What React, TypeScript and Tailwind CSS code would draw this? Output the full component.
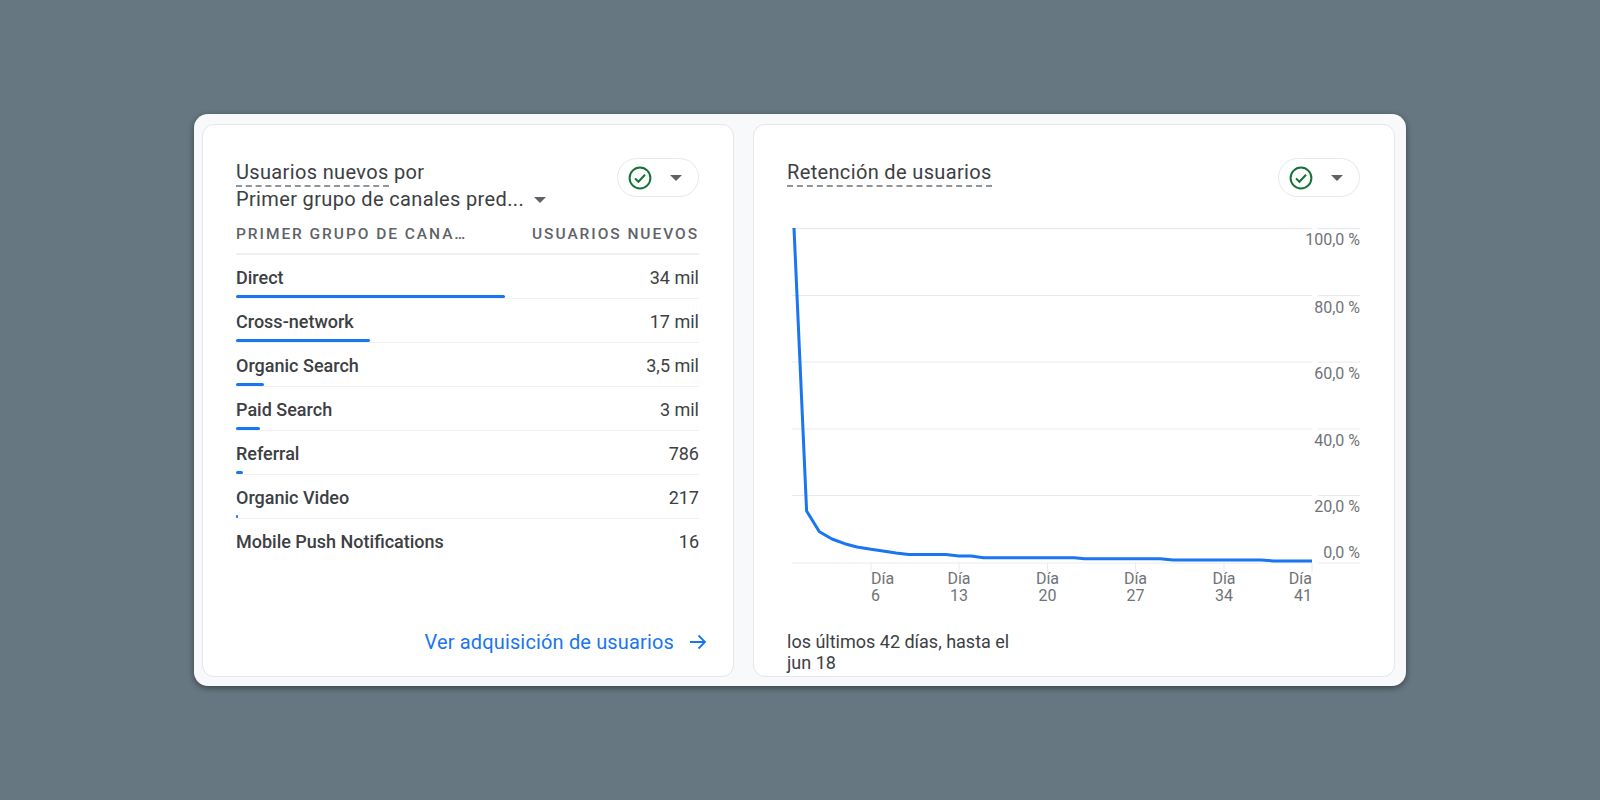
const channels = [
  { name: 'Direct', value: '34 mil', bar: 269 },
  { name: 'Cross-network', value: '17 mil', bar: 134 },
  { name: 'Organic Search', value: '3,5 mil', bar: 28 },
  { name: 'Paid Search', value: '3 mil', bar: 24 },
  { name: 'Referral', value: '786', bar: 7 },
  { name: 'Organic Video', value: '217', bar: 2 },
  { name: 'Mobile Push Notifications', value: '16', bar: 0 },
];

const gridLines = [227.5, 294.5, 361, 428, 494.5, 562];

const yLabels = [
  { label: '100,0 %', y: 244 },
  { label: '80,0 %', y: 312 },
  { label: '60,0 %', y: 378 },
  { label: '40,0 %', y: 445 },
  { label: '20,0 %', y: 511 },
  { label: '0,0 %', y: 557 },
];

const xLabels = [
  { day: '6', x: 871, anchor: 'start' },
  { day: '13', x: 959, anchor: 'middle' },
  { day: '20', x: 1047.5, anchor: 'middle' },
  { day: '27', x: 1135.5, anchor: 'middle' },
  { day: '34', x: 1224, anchor: 'middle' },
  { day: '41', x: 1312, anchor: 'end' },
];

const retention =
  '794,227 806.6,510 819.4,530.7 832,538 844.7,542.7 857,546 871,548.3 883,550 896,552 908.7,553.5 920,553.5 933,553.5 945.7,553.5 959,555 971,555 983.6,556.7 1074,556.7 1084.6,557.7 1160,557.7 1173,559 1261,559 1274,560 1312,560';

function Caret({ className }: { className?: string }) {
  return (
    <svg width="12" height="6" viewBox="0 0 12 6" className={className}>
      <path d="M0 0h12L6 6z" fill="#5f6368" />
    </svg>
  );
}

function StatusPill() {
  return (
    <div className="flex h-[39px] w-[82px] shrink-0 items-center rounded-full border border-[#e6e8eb] pl-[10px]">
      <svg width="24" height="24" viewBox="0 0 24 24" fill="none" stroke="#137333">
        <circle cx="12" cy="12" r="10.4" strokeWidth="2" />
        <path d="M7 12.4l3.4 3.4L17 8.8" strokeWidth="2" />
      </svg>
      <Caret className="ml-[18px]" />
    </div>
  );
}

function NewUsersCard() {
  return (
    <div className="flex w-[532px] flex-col rounded-[12px] border border-[#e3e6ea] bg-white pl-[33px] pr-[34px] pt-[33px]">
      <div className="flex items-start justify-between">
        <div className="text-[20px] leading-[27px] tracking-[0.35px] text-[#3c4043]">
          <div className="mt-[1px]">
            <span className="border-b-2 border-dashed border-[#8f9499] pb-[1px]">Usuarios nuevos</span> por
          </div>
          <div className="flex items-center">
            Primer grupo de canales pred...
            <Caret className="ml-[10px]" />
          </div>
        </div>
        <StatusPill />
      </div>

      <div className="mt-[11px] flex h-[31px] items-start justify-between border-b-2 border-[#eff0f2] text-[15.5px] font-medium leading-[20px] tracking-[1.95px] text-[#5f6368]">
        <span>PRIMER GRUPO DE CANA…</span>
        <span>USUARIOS NUEVOS</span>
      </div>

      {channels.map((row, index) => (
        <div
          key={row.name}
          className={`relative flex h-[44px] shrink-0 items-start justify-between pt-[12px] text-[18px] leading-[22px] text-[#3c4043] ${
            index < channels.length - 1 ? 'border-b border-[#eff0f2]' : ''
          }`}
        >
          <span className="font-medium">{row.name}</span>
          <span>{row.value}</span>
          {row.bar > 0 && (
            <div
              className="absolute bottom-0 left-0 h-[3px] rounded-[2px] bg-[#1a75f0]"
              style={{ width: row.bar }}
            />
          )}
        </div>
      ))}

      <div className="mr-[-8px] mt-[67px] flex items-center justify-end text-[20px] leading-[24px] tracking-[0.15px] text-[#1a75f0]">
        <span>Ver adquisición de usuarios</span>
        <svg width="18" height="16" viewBox="0 0 18 16" fill="none" stroke="#1a75f0" strokeWidth="1.8" className="ml-[15px]">
          <path d="M1 8h15M9.5 1.5L16 8l-6.5 6.5" />
        </svg>
      </div>
    </div>
  );
}

function RetentionCard() {
  return (
    <div className="flex w-[642px] flex-col rounded-[12px] border border-[#e3e6ea] bg-white pl-[33px] pr-[34px] pt-[33px]">
      <div className="flex items-start justify-between">
        <div className="mt-[1px] text-[20px] leading-[27px] tracking-[0.35px] text-[#3c4043]">
          <span className="border-b-2 border-dashed border-[#8f9499] pb-[1px]">Retención de usuarios</span>
        </div>
        <StatusPill />
      </div>

      <svg width="575" height="410" viewBox="786 220 575 410" className="ml-[-1px] mt-[24px] shrink-0">
        {gridLines.map((y, index) => (
          <g key={y} stroke="#e8eaed" strokeWidth={index === 0 ? 1.5 : 1}>
            <line x1="792" y1={y} x2="1312" y2={y} />
            <line x1="1318" y1={y} x2="1360" y2={y} />
          </g>
        ))}
        {xLabels.map((tick) => (
          <line key={tick.day} x1={tick.x} y1="562" x2={tick.x} y2="571" stroke="#e8eaed" />
        ))}
        <polyline points={retention} fill="none" stroke="#1a75f0" strokeWidth="3" strokeLinejoin="round" />
        <g fontSize="16" fill="#6f7377">
          {yLabels.map((item) => (
            <text key={item.label} x="1360" y={item.y} textAnchor="end">
              {item.label}
            </text>
          ))}
          {xLabels.map((tick) => (
            <text key={tick.day} textAnchor={tick.anchor as 'start' | 'middle' | 'end'}>
              <tspan x={tick.x} y="583">
                Día
              </tspan>
              <tspan x={tick.x} y="600">
                {tick.day}
              </tspan>
            </text>
          ))}
        </g>
      </svg>

      <p className="w-[240px] text-[18px] leading-[21px] text-[#3c4043]">los últimos 42 días, hasta el jun 18</p>
    </div>
  );
}

export default function App() {
  return (
    <div className="h-[800px] w-[1600px] overflow-hidden bg-[#667781] pl-[194px] pt-[114px] font-[Roboto,sans-serif]">
      <div className="flex h-[572px] w-[1212px] gap-[19px] rounded-[14px] bg-[#f8f9fb] pb-[9px] pl-[8px] pr-[11px] pt-[10px] shadow-[0_2px_6px_rgba(0,0,0,0.45)]">
        <NewUsersCard />
        <RetentionCard />
      </div>
    </div>
  );
}
